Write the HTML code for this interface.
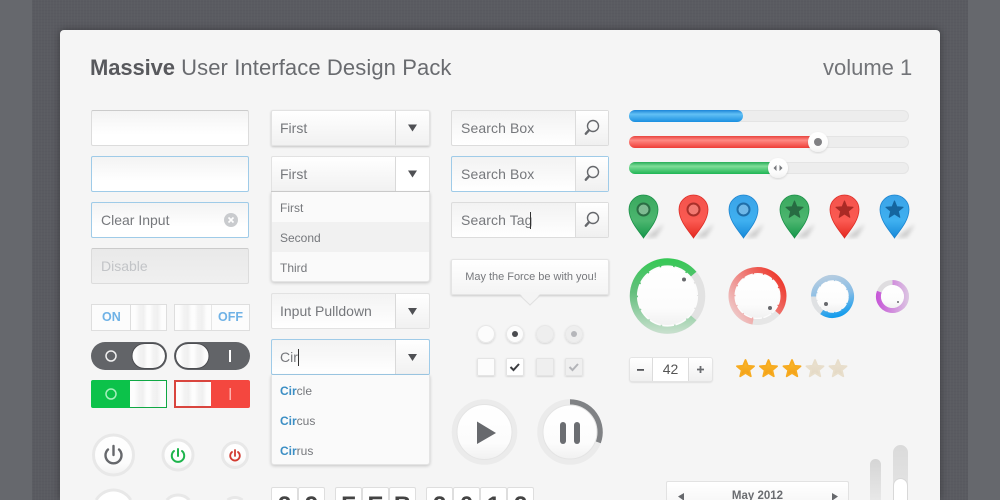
<!DOCTYPE html>
<html><head><meta charset="utf-8"><style>
*{box-sizing:border-box}
html,body{margin:0;padding:0;width:1000px;height:500px;overflow:hidden}
#root{position:absolute;left:0;top:0;width:1000px;height:500px;overflow:hidden;background:#66686d;font-family:"Liberation Sans",sans-serif;color:#76787c}
.tex{position:absolute;left:32px;right:32px;top:0;bottom:0;background:#5a5b61;background-image:repeating-linear-gradient(90deg,rgba(255,255,255,.015) 0 1px,transparent 1px 3px),repeating-linear-gradient(0deg,rgba(0,0,0,.025) 0 1px,transparent 1px 3px)}
.card{position:absolute;left:60px;top:30px;width:880px;height:470px;background:#f5f5f5;border-radius:4px 4px 0 0;box-shadow:0 0 8px rgba(0,0,0,.35)}
.a{position:absolute}
.t{position:absolute;white-space:nowrap}
.inp{position:absolute;width:158px;height:36px;left:91px;border:1px solid #dcdcdc;border-top-color:#cbcbcb;border-radius:2px;background:linear-gradient(#f3f3f3,#fff 70%);font-size:14px;line-height:34px;padding-left:9px}
.sel{position:absolute;left:271px;width:159px;height:36px;border:1px solid #e2e2e2;border-radius:2px;background:linear-gradient(#fff,#f1f1f1);box-shadow:0 1px 2px rgba(0,0,0,.2);font-size:14px;line-height:34px;padding-left:8px}
.sel i{position:absolute;left:123px;top:0;bottom:0;width:1px;background:#d9d9d9}
.sel b{position:absolute;left:124px;right:0;top:0;bottom:0;background:linear-gradient(#fff,#f1f1f1);border-radius:0 2px 2px 0}
.menu{position:absolute;left:271px;width:159px;height:90px;background:#fafafa;border:solid #e4e4e4;border-width:0 1px 1px;border-radius:0 0 3px 3px;box-shadow:0 1px 3px rgba(0,0,0,.2);font-size:12px}
.menu div{height:30px;line-height:32px;padding-left:8px}
.menu strong{color:#3b8ec4}
.srch{position:absolute;left:451px;width:158px;height:36px;border:1px solid #dcdcdc;border-radius:2px;background:linear-gradient(#f2f2f2,#fff);font-size:14px;line-height:34px;padding-left:9px;letter-spacing:.1px}
.srch b{position:absolute;left:123px;right:0;top:0;bottom:0;border-left:1px solid #dcdcdc;background:linear-gradient(#fff,#f0f0f0)}
.blue{border-color:#9fcbe8 !important}
.tg{position:absolute;height:27px;top:304px;width:76px;border:1px solid #dedede;background:#fcfcfc}
.kn{position:absolute;top:0;bottom:0;background:linear-gradient(90deg,#fdfdfd 12%,#f3f3f3 24%,#f0f0f0 36%,#fdfdfd 46%,#fdfdfd 54%,#f3f3f3 64%,#f0f0f0 76%,#fdfdfd 88%);}
.fd{position:absolute;top:487px;width:27px;height:13px;overflow:hidden;border:1px solid #dedede;border-bottom:0;background:#fff;border-radius:2px 2px 0 0;text-align:center;font:bold 24px/35px "Liberation Sans",sans-serif;color:#444}
</style></head><body><div id="root">
<div class="tex"></div>
<div class="card"></div>

<div class="t" style="left:90px;top:55px;font-size:22px;line-height:26px;color:#696b6f;letter-spacing:.1px"><b style="color:#58595d;letter-spacing:-.1px">Massive</b> User Interface Design Pack</div>
<div class="t" style="left:823px;top:55px;font-size:22px;line-height:26px;color:#727478">volume 1</div>

<div class="inp" style="top:110px"></div>
<div class="inp blue" style="top:156px"></div>
<div class="inp blue" style="top:202px">Clear Input</div>
<div class="inp" style="top:248px;background:linear-gradient(#e9e9e9,#f0f0f0);color:#c2c4c7">Disable</div>

<div class="tg" style="left:91px;color:#6fb2e6;font:bold 12.5px/25px 'Liberation Sans',sans-serif;padding-left:10px">ON<div class="kn" style="left:38px;right:0;border-left:1px solid #dedede"></div></div>
<div class="tg" style="left:174px;color:#6fb2e6;font:bold 12.5px/25px 'Liberation Sans',sans-serif;padding-left:43px">OFF<div class="kn" style="left:0;width:37px;border-right:1px solid #e6e6e6"></div></div>
<div class="a" style="left:91px;top:342px;width:76px;height:28px;border-radius:14px;background:#626468"></div>
<div class="a" style="left:174px;top:342px;width:76px;height:28px;border-radius:14px;background:#626468"></div>
<div class="kn" style="left:132px;top:344px;bottom:auto;width:33px;height:24px;border-radius:12px"></div>
<div class="kn" style="left:176px;top:344px;bottom:auto;width:33px;height:24px;border-radius:12px"></div>
<div class="a" style="left:91px;top:380px;width:76px;height:28px;border-radius:2px;background:#0cc24a"></div>
<div class="kn" style="left:130px;top:381px;bottom:auto;width:36px;height:26px"></div>
<div class="a" style="left:174px;top:380px;width:76px;height:28px;border-radius:2px;background:#f4473f"></div>
<div class="kn" style="left:176px;top:382px;bottom:auto;width:35px;height:24px"></div>

<div class="sel" style="top:110px">First<i></i></div>
<div class="sel" style="top:156px;box-shadow:none">First<i></i><b style="background:#fff"></b></div>
<div class="a" style="left:271px;top:191px;width:159px;height:1px;background:#c9c9c9;z-index:2"></div>
<div class="menu" style="top:192px"><div>First</div><div style="background:#f1f1f1">Second</div><div>Third</div></div>
<div class="sel" style="top:293px;background:linear-gradient(#f3f3f3,#fff);box-shadow:none">Input Pulldown<i></i><b></b></div>
<div class="sel blue" style="top:339px;background:linear-gradient(#f3f3f3,#fff);box-shadow:none">Cir<i></i><b></b></div>
<div class="a" style="left:298px;top:349px;width:1px;height:17px;background:#333"></div>
<div class="menu" style="top:375px"><div><strong>Cir</strong>cle</div><div><strong>Cir</strong>cus</div><div><strong>Cir</strong>rus</div></div>

<div class="srch" style="top:110px">Search Box<b></b></div>
<div class="srch blue" style="top:156px">Search Box<b></b></div>
<div class="srch" style="top:202px">Search Tag<b></b></div>
<div class="a" style="left:530px;top:212px;width:1px;height:17px;background:#333"></div>
<div class="a" style="left:451px;top:259px;width:158px;height:36px;border:1px solid #e4e4e4;background:linear-gradient(#fff,#f4f4f4);border-radius:2px;box-shadow:0 1px 2px rgba(0,0,0,.18);font-size:11px;line-height:34px;text-align:center;padding-left:2px;letter-spacing:-.02px">May the Force be with you!</div>

<div class="fd" style="left:271px">2</div><div class="fd" style="left:298px">9</div>
<div class="fd" style="left:335px">F</div><div class="fd" style="left:362px">E</div><div class="fd" style="left:389px">B</div>
<div class="fd" style="left:426px">2</div><div class="fd" style="left:453px">0</div><div class="fd" style="left:480px">1</div><div class="fd" style="left:507px">2</div>

<div class="a" style="left:630px;top:358px;width:82px;height:23px;background:linear-gradient(#fff,#f0f0f0);border-radius:2px;box-shadow:0 0 0 1px #e4e4e4,0 1px 2px rgba(0,0,0,.2)"></div>
<div class="a" style="left:652px;top:358px;width:37px;height:23px;background:#fff;border:solid #dcdcdc;border-width:0 1px;text-align:center;font-size:14px;line-height:23px;color:#555">42</div>

<div class="a" style="left:666px;top:481px;width:183px;height:19px;overflow:hidden;background:linear-gradient(#fff,#f8f8f8);border:1px solid #e2e2e2;border-bottom:0;border-radius:2px 2px 0 0;text-align:center;font:bold 11.5px/29px 'Liberation Sans',sans-serif;color:#6a6c70">May 2012</div>
<div class="a" style="left:870px;top:459px;width:11px;height:41px;border-radius:6px 6px 0 0;background:linear-gradient(#d5d5d5,#e8e8e8)"></div>
<div class="a" style="left:893px;top:445px;width:15px;height:55px;border-radius:8px 8px 0 0;background:linear-gradient(#dadada,#e6e6e6)"></div>
<div class="a" style="left:893px;top:478px;width:15px;height:22px;border:1px solid #d8d8d8;border-bottom:0;border-radius:8px 8px 0 0;background:#fff"></div>

<svg class="a" style="left:0;top:0" width="1000" height="500" viewBox="0 0 1000 500">
<defs>
<linearGradient id="gb" x1="0" y1="0" x2="0" y2="1"><stop offset="0" stop-color="#1b84d8"/><stop offset=".35" stop-color="#62c0f5"/><stop offset="1" stop-color="#1a8fe0"/></linearGradient>
<linearGradient id="gr" x1="0" y1="0" x2="0" y2="1"><stop offset="0" stop-color="#e8433e"/><stop offset=".35" stop-color="#ff8a84"/><stop offset="1" stop-color="#ee3d37"/></linearGradient>
<linearGradient id="gg" x1="0" y1="0" x2="0" y2="1"><stop offset="0" stop-color="#26ac57"/><stop offset=".35" stop-color="#7fdd98"/><stop offset="1" stop-color="#1fb655"/></linearGradient>
<linearGradient id="pg" x1="0" y1="0" x2="0" y2="1"><stop offset="0" stop-color="#39a85e"/><stop offset=".6" stop-color="#4cb66f"/><stop offset="1" stop-color="#14964a"/></linearGradient>
<linearGradient id="pr" x1="0" y1="0" x2="0" y2="1"><stop offset="0" stop-color="#f4534c"/><stop offset=".6" stop-color="#fb5a52"/><stop offset="1" stop-color="#e4281f"/></linearGradient>
<linearGradient id="pb" x1="0" y1="0" x2="0" y2="1"><stop offset="0" stop-color="#3aa3e8"/><stop offset=".6" stop-color="#3fb0f0"/><stop offset="1" stop-color="#1688d8"/></linearGradient>
<linearGradient id="w" x1="0" y1="0" x2="0" y2="1"><stop offset="0" stop-color="#fff"/><stop offset=".7" stop-color="#fcfcfc"/><stop offset="1" stop-color="#f1f1f1"/></linearGradient>
<linearGradient id="sy" x1="0" y1="0" x2="0" y2="1"><stop offset="0" stop-color="#fbbf30"/><stop offset="1" stop-color="#f29a12"/></linearGradient>
<linearGradient id="sd" x1="0" y1="0" x2="0" y2="1"><stop offset="0" stop-color="#ece3d3"/><stop offset="1" stop-color="#e2d7c2"/></linearGradient>
<linearGradient id="dg" gradientUnits="userSpaceOnUse" x1="667" y1="260" x2="667" y2="332"><stop offset="0" stop-color="#37c856"/><stop offset=".45" stop-color="#65bf7e"/><stop offset="1" stop-color="#c6dfcc"/></linearGradient>
<linearGradient id="dr" gradientUnits="userSpaceOnUse" x1="732" y1="318" x2="782" y2="280"><stop offset="0" stop-color="#efd0d0"/><stop offset=".45" stop-color="#ef8f8c"/><stop offset="1" stop-color="#ee3a2e"/></linearGradient>
<linearGradient id="db" gradientUnits="userSpaceOnUse" x1="825" y1="276" x2="835" y2="317"><stop offset="0" stop-color="#b7cde0"/><stop offset=".5" stop-color="#88bde6"/><stop offset="1" stop-color="#129ced"/></linearGradient>
<linearGradient id="dp" gradientUnits="userSpaceOnUse" x1="877" y1="296" x2="909" y2="296"><stop offset="0" stop-color="#c758d8"/><stop offset="1" stop-color="#dcc6e2"/></linearGradient>
<path id="pin" d="M0 43C-3 38-14.500 26.500-14.500 14.500A14.500 14.500 0 0 1 14.500 14.500C14.500 26.500 3 38 0 43Z"/>
<path id="st" d="M0-9L2.350-3.240 8.560-2.780 3.800 1.240 5.290 7.280 0 4-5.290 7.280-3.800 1.240-8.560-2.780-2.350-3.240Z"/>
<filter id="bl"><feGaussianBlur stdDeviation="2"/></filter>
<filter id="sh"><feDropShadow dx="0" dy="1" stdDeviation="1" flood-color="#000" flood-opacity=".14"/></filter>
</defs>

<!-- clear icon -->
<circle cx="231" cy="220" r="7" fill="#c9cbce"/><path d="M228.500 217.500l5 5m0-5l-5 5" stroke="#fff" stroke-width="1.600"/>

<!-- dark knob rings -->
<rect x="132" y="343.500" width="33.500" height="25" rx="12.500" fill="none" stroke="#4c4d51"/>
<rect x="175.500" y="343.500" width="33.500" height="25" rx="12.500" fill="none" stroke="#4c4d51"/>

<!-- toggle icons -->
<circle cx="111" cy="356" r="5" fill="none" stroke="#f0f0f0" stroke-width="1.500"/>
<rect x="229" y="350" width="2" height="12" fill="#fff"/>
<circle cx="111" cy="394" r="5" fill="none" stroke="#a6f0bd" stroke-width="1.500"/>
<rect x="229.500" y="388" width="1.500" height="12" fill="#ffb0ac"/>
<rect x="130" y="380" width="37" height="1" fill="#0fa844"/><rect x="166" y="380" width="1" height="28" fill="#0fa844"/><rect x="130" y="407" width="37" height="1" fill="#0fa844"/>
<rect x="174" y="380" width="37" height="2" fill="#d9453e"/><rect x="174" y="380" width="2" height="28" fill="#d9453e"/><rect x="174" y="406" width="37" height="2" fill="#d9453e"/>

<!-- power buttons -->
<g fill="url(#w)" stroke="#e8e8e8" stroke-width="3">
<circle cx="113.500" cy="455" r="20"/><circle cx="178" cy="455" r="15"/><circle cx="235" cy="455" r="12.500"/>
</g>
<g fill="#fff" stroke="#e8e8e8" stroke-width="3">
<path d="M96.200 500A20 20 0 0 1 130.800 500"/><path d="M166.800 500A15 15 0 0 1 189.200 500"/><path d="M227.500 500A12.500 12.500 0 0 1 242.500 500"/>
</g>
<g fill="none" stroke-linecap="round">
<g stroke="#66686c" stroke-width="2.400"><path d="M108 449.500A8 8 0 1 0 119 449.500"/><path d="M113.500 446V455"/></g>
<g stroke="#1db44c" stroke-width="2"><path d="M174 451A6.200 6.200 0 1 0 182 451"/><path d="M178 449V456"/></g>
<g stroke="#d23a30" stroke-width="1.800"><path d="M232 452A4.800 4.800 0 1 0 238 452"/><path d="M235 450V456"/></g>
</g>

<!-- select arrows -->
<g fill="#4f5054">
<path d="M408 124.500h9l-4.500 7z"/><path d="M408 170.500h9l-4.500 7z"/><path d="M408 308h9l-4.500 7z"/><path d="M408 354h9l-4.500 7z"/>
</g>

<!-- magnifiers -->
<g fill="none" stroke="#66686c">
<g id="mg"><circle cx="593" cy="126" r="5.500" stroke-width="1.400"/><path d="M589 130.200l-3.200 3.500" stroke-width="2.400" stroke-linecap="round"/></g>
<use href="#mg" y="46"/><use href="#mg" y="92"/>
</g>

<!-- tooltip arrow -->
<path d="M520 294L530 305 540 294Z" fill="#f4f4f4"/><path d="M520 295.500L530 305 540 295.500" fill="none" stroke="#e0e0e0"/>

<!-- radios -->
<g filter="url(#sh)" fill="#fcfcfc" stroke="#e8e8e8">
<circle cx="486" cy="334" r="8.500"/><circle cx="515" cy="334" r="8.500"/><circle cx="545" cy="334" r="8.500" fill="#eeeeee"/><circle cx="574" cy="334" r="8.500" fill="#eeeeee"/>
</g>
<circle cx="515" cy="334" r="3" fill="#4a4b4f"/><circle cx="574" cy="334" r="3" fill="#b5b6ba"/>
<!-- checkboxes -->
<g filter="url(#sh)" stroke="#e4e4e4">
<rect x="477.500" y="358.500" width="17" height="17" rx="1" fill="#fcfcfc"/><rect x="506.500" y="358.500" width="17" height="17" rx="1" fill="#fff"/>
<rect x="536.500" y="358.500" width="17" height="17" rx="1" fill="#efefef"/><rect x="565.500" y="358.500" width="17" height="17" rx="1" fill="#efefef"/>
</g>
<path d="M510.500 367l3 3 5.500-6" fill="none" stroke="#3c3d41" stroke-width="2"/>
<path d="M569.500 367l3 3 5.500-6" fill="none" stroke="#b3b4b8" stroke-width="2"/>

<!-- play / pause -->
<circle cx="484.500" cy="432" r="30" fill="none" stroke="#ebebeb" stroke-width="5.500"/>
<circle cx="484.500" cy="432" r="27.500" fill="url(#w)" stroke="#e4e4e4"/>
<path d="M477 421.500L496 433 477 444Z" fill="#67696d"/>
<circle cx="570" cy="432" r="30" fill="none" stroke="#ebebeb" stroke-width="5.500"/>
<path d="M570 402A30 30 0 0 1 598.200 442.300" fill="none" stroke="#808285" stroke-width="5.500"/>
<circle cx="570" cy="432" r="27" fill="url(#w)" stroke="#e4e4e4"/>
<rect x="560" y="422" width="6" height="22" rx="3" fill="#6b6d71"/><rect x="574" y="422" width="6" height="22" rx="3" fill="#6b6d71"/>

<!-- sliders -->
<g fill="#ededed" stroke="#e4e4e4">
<rect x="629.500" y="110.500" width="279" height="11" rx="5.500"/><rect x="629.500" y="136.500" width="279" height="11" rx="5.500"/><rect x="629.500" y="162.500" width="279" height="11" rx="5.500"/>
</g>
<rect x="629" y="110" width="114" height="12" rx="6" fill="url(#gb)"/>
<rect x="629" y="136" width="192" height="12" rx="6" fill="url(#gr)"/>
<rect x="629" y="162" width="152" height="12" rx="6" fill="url(#gg)"/>
<circle cx="818" cy="142" r="10" fill="url(#w)" filter="url(#sh)"/><circle cx="818" cy="142" r="4" fill="#808083"/>
<circle cx="778" cy="168" r="10" fill="url(#w)" filter="url(#sh)"/>
<path d="M776.500 165v6l-3-3zM779.500 165v6l3-3z" fill="#77797d"/>

<!-- pins -->
<g fill="#000" opacity=".18" filter="url(#bl)">
<path d="M645 238L664 224 656 237Z"/><path d="M695 238L714 224 706 237Z"/><path d="M745 238L764 224 756 237Z"/><path d="M796 238L815 224 807 237Z"/><path d="M846 238L865 224 857 237Z"/><path d="M896 238L915 224 907 237Z"/>
</g>
<g transform="translate(643.500,195)"><use href="#pin" fill="url(#pg)" stroke="#1b9048" stroke-width=".8"/><circle cy="14.500" r="6" fill="#7fbb92" stroke="#2b6e44" stroke-width="2"/></g>
<g transform="translate(693.500,195)"><use href="#pin" fill="url(#pr)" stroke="#dc2c25" stroke-width=".8"/><circle cy="14.500" r="6" fill="#f27a72" stroke="#a9302a" stroke-width="2"/></g>
<g transform="translate(743.500,195)"><use href="#pin" fill="url(#pb)" stroke="#1c84cf" stroke-width=".8"/><circle cy="14.500" r="6" fill="#6fb8e8" stroke="#1f6ea8" stroke-width="2"/></g>
<g transform="translate(794.500,195)"><use href="#pin" fill="url(#pg)" stroke="#1b9048" stroke-width=".8"/><use href="#st" y="15" fill="#276c42" stroke="#276c42" stroke-linejoin="round"/></g>
<g transform="translate(844.500,195)"><use href="#pin" fill="url(#pr)" stroke="#dc2c25" stroke-width=".8"/><use href="#st" y="15" fill="#aa2a25" stroke="#aa2a25" stroke-linejoin="round"/></g>
<g transform="translate(894.500,195)"><use href="#pin" fill="url(#pb)" stroke="#1c84cf" stroke-width=".8"/><use href="#st" y="15" fill="#15659f" stroke="#15659f" stroke-linejoin="round"/></g>

<!-- dials -->
<circle cx="667.500" cy="296" r="33.500" fill="none" stroke="#e2e2e2" stroke-width="8.500"/>
<path d="M693.200 317.500A33.500 33.500 0 1 1 693.200 274.500" fill="none" stroke="url(#dg)" stroke-width="8.500"/>
<circle cx="667.500" cy="296" r="29.500" fill="url(#w)"/><circle cx="667.500" cy="296" r="29.800" fill="none" stroke="#fcfcfc" stroke-width="1.600" stroke-dasharray="11.800 1.600"/>
<circle cx="684" cy="279.500" r="2" fill="#68696d"/>

<circle cx="757.500" cy="296" r="25.500" fill="none" stroke="#e6e6e6" stroke-width="7"/>
<path d="M753.100 321.100A25.500 25.500 0 1 1 777 312.400" fill="none" stroke="url(#dr)" stroke-width="7"/>
<circle cx="757.500" cy="296" r="22" fill="url(#w)"/><circle cx="757.500" cy="296" r="22.400" fill="none" stroke="#fcfcfc" stroke-width="1.300" stroke-dasharray="8.800 1.400"/>
<circle cx="770" cy="308" r="2" fill="#68696d"/>

<circle cx="832.500" cy="296.500" r="18.500" fill="none" stroke="#dfe1e3" stroke-width="6"/>
<path d="M814 296.500A18.500 18.500 0 1 1 821.900 311.650" fill="none" stroke="url(#db)" stroke-width="6"/>
<circle cx="832.500" cy="296.500" r="15.500" fill="url(#w)"/><circle cx="832.500" cy="296.500" r="15.800" fill="none" stroke="#fcfcfc" stroke-width="1" stroke-dasharray="6.500 1.200"/>
<circle cx="826" cy="304" r="2" fill="#68696d"/>

<circle cx="892.500" cy="296.500" r="14" fill="none" stroke="#dfdde0" stroke-width="5"/>
<path d="M892.500 282.500A14 14 0 1 1 879.300 291.700" fill="none" stroke="url(#dp)" stroke-width="5"/>
<circle cx="892.500" cy="296.500" r="11.500" fill="url(#w)"/>
<circle cx="898" cy="302" r="1" fill="#68696d"/>

<!-- stepper -->
<rect x="637" y="369" width="7" height="1.800" fill="#55565a"/>
<path d="M697 369.500h7M700.500 366v7" stroke="#6a6c70" stroke-width="1.800"/>

<!-- stars -->
<g stroke-linejoin="round" stroke-width="1.800">
<use href="#st" x="745.500" y="369" fill="url(#sy)" stroke="#f7ab20"/><use href="#st" x="768.500" y="369" fill="url(#sy)" stroke="#f7ab20"/><use href="#st" x="792" y="369" fill="url(#sy)" stroke="#f7ab20"/>
<use href="#st" x="815" y="369" fill="url(#sd)" stroke="#e8decb"/><use href="#st" x="838" y="369" fill="url(#sd)" stroke="#e8decb"/>
</g>

<!-- month arrows -->
<path d="M684 493v7h-1l-5-3.500zM832 493v7h1l5-3.500z" fill="#66686c"/>
</svg>
</div></body></html>
